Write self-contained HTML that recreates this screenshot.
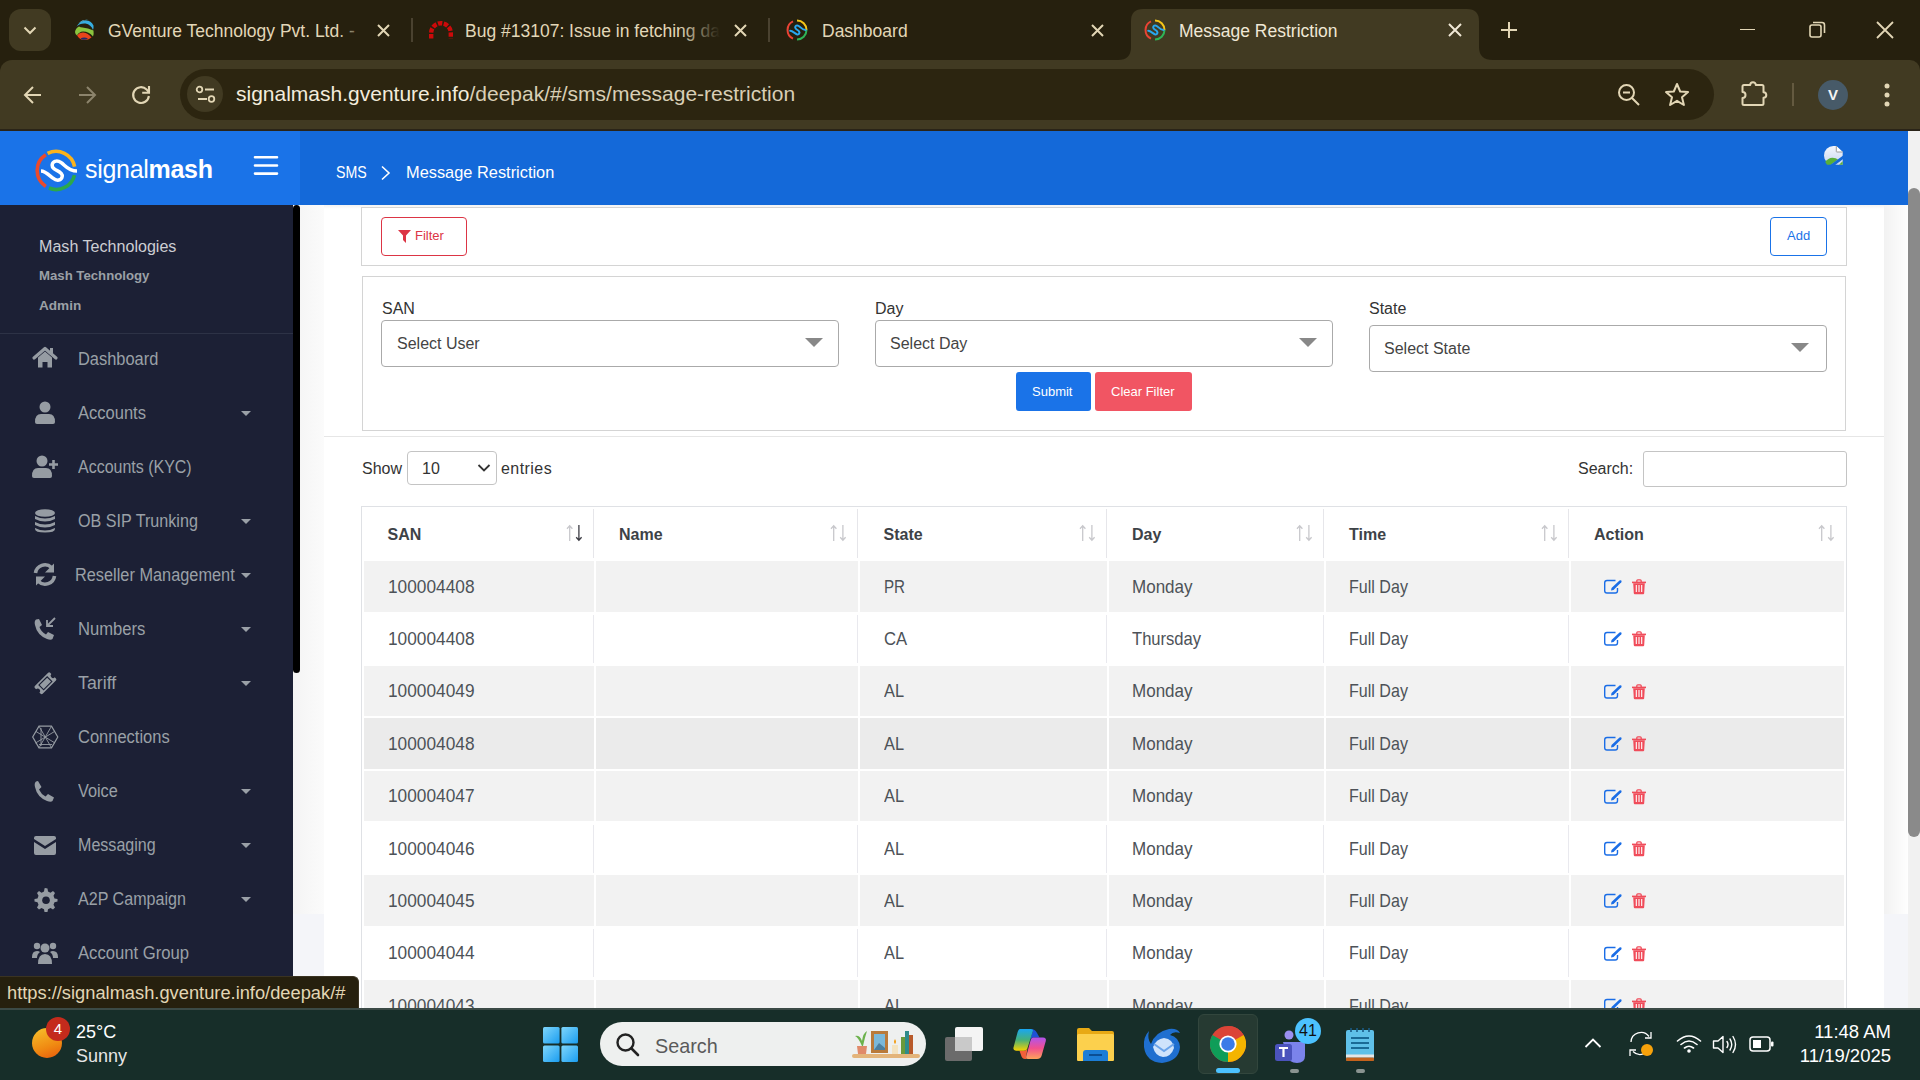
<!DOCTYPE html>
<html><head><meta charset="utf-8">
<style>
*{box-sizing:border-box;margin:0;padding:0}
html,body{width:1920px;height:1080px;overflow:hidden;background:#fff;font-family:"Liberation Sans",sans-serif}
.a{position:absolute}
.nw{white-space:nowrap}
/* chrome */
#tabs{left:0;top:0;width:1920px;height:80px;background:#26200e}
#toolbar{left:0;top:60px;width:1920px;height:70px;background:#413a22;border-top-left-radius:12px;border-top-right-radius:10px}
.tabt{font-size:17.5px;color:#e2d7b8;top:20px;line-height:22px}
.sep{width:2px;height:24px;top:18px;background:#4a4230}
#omni{left:180px;top:69px;width:1534px;height:51px;border-radius:26px;background:#2c2510}
/* page */
#hdr1{left:0;top:131px;width:300px;height:74px;background:#1a73e8}
#hdr2{left:300px;top:131px;width:1608px;height:74px;background:#1469d9}
#side{left:0;top:205px;width:293px;height:803px;background:#1c2035}
#sbar{left:293px;top:205px;width:7px;height:468px;background:#000;border-radius:4px;z-index:5}
#gl{left:293px;top:205px;width:31px;height:709px;background:linear-gradient(90deg,#f4f4f4,#fbfbfb)}
#gl2{left:293px;top:914px;width:31px;height:94px;background:#f4f5f9}
#gr{left:1884px;top:205px;width:24px;height:709px;background:linear-gradient(90deg,#f2f2f2,#fefefe)}
#gr2{left:1884px;top:914px;width:24px;height:94px;background:#f4f5f9}
#vs{left:1908px;top:131px;width:12px;height:877px;background:#f1f1f1}
#vthumb{left:1908px;top:188px;width:12px;height:649px;background:#8a8a8a;border-radius:6px}
.mi{left:78px;font-size:17.5px;color:#9aa0a7;line-height:20px;transform-origin:0 50%}
.caret{left:241px;width:0;height:0;border-left:5px solid transparent;border-right:5px solid transparent;border-top:5px solid #9aa0a7}
.ic{left:31px;width:28px;height:24px}
/* content */
.card{border:1px solid #d4d4d4;background:#fff}
.lbl{font-size:16px;color:#333;line-height:18px}
.sel{border:1px solid #aaa;border-radius:4px;background:#fff}
.selt{font-size:16px;color:#444;line-height:18px}
.tri{width:0;height:0;border-left:8px solid transparent;border-right:8px solid transparent;border-top:8px solid #888}
.th{font-size:16px;font-weight:700;color:#3d4247;line-height:18px;margin-top:0.7px}
.td{font-size:18.5px;color:#4d5258;line-height:20px;transform-origin:0 50%}
.row{left:364px;width:1480px;height:50px}
</style></head><body>
<!-- ======== CHROME TABS ======== -->
<div id="tabs" class="a"></div>
<div class="a" style="left:9px;top:9px;width:42px;height:42px;border-radius:12px;background:#413a22"></div>
<svg class="a" style="left:22px;top:22px" width="16" height="16" viewBox="0 0 16 16"><path d="M2.5 5.5 L8 11 L13.5 5.5" fill="none" stroke="#e2d6b5" stroke-width="2"/></svg>
<!-- tab1 -->
<svg class="a" style="left:74px;top:19px" width="21" height="22" viewBox="0 0 21 22">
<path d="M2.5 7.5Q6 1.5 12 1.5Q17 1.5 19.5 6.5Q19.8 9 19 11Q17 5.5 11.5 4.5Q6 4 2.5 7.5Z" fill="#37aee0"/>
<path d="M4.5 4Q9 0 14.5 1Q11 0.5 7 3Z" fill="#5fc6ee"/>
<path d="M1 13Q1.5 9 5 7.5Q6.5 8.5 8.5 8.5Q14 9 19.5 11.5Q20 14.5 19 17.5Q15 12.5 9 12.5Q5 12.8 3 16.5Q1.2 15.5 1 13Z" fill="#8bc53f"/>
<path d="M3 16.5Q5.5 13 9.5 13.5Q14 14 17.5 18.5Q14.5 21 10 21Q6 21 3 16.5Z" fill="#e8441b"/>
<path d="M6.5 19.5Q10 17.5 14 19.5Q11 21.5 8 20.5Z" fill="#1f2a6b"/>
</svg>
<div class="a tabt nw" style="left:108px;width:250px;overflow:hidden">GVenture Technology Pvt. Ltd. -</div>
<div class="a" style="left:338px;top:16px;width:30px;height:30px;background:linear-gradient(90deg,rgba(38,32,14,0),#26200e)"></div>
<svg class="a" style="left:377px;top:24px" width="13" height="13" viewBox="0 0 13 13"><path d="M1 1L12 12M12 1L1 12" stroke="#e2d6b5" stroke-width="2"/></svg>
<div class="a sep" style="left:411px"></div>
<!-- tab2 -->
<svg class="a" style="left:428px;top:19px" width="26" height="20" viewBox="0 0 26 20"><path d="M3.2 19.5V14A9.8 9.8 0 0 1 22.8 14V19.5" fill="none" stroke="#cc0a0a" stroke-width="4.4" stroke-dasharray="4.4 1.5"/></svg>
<div class="a tabt nw" style="left:465px;width:255px;overflow:hidden">Bug #13107: Issue in fetching da</div>
<div class="a" style="left:680px;top:16px;width:40px;height:30px;background:linear-gradient(90deg,rgba(38,32,14,0),#26200e)"></div>
<svg class="a" style="left:734px;top:24px" width="13" height="13" viewBox="0 0 13 13"><path d="M1 1L12 12M12 1L1 12" stroke="#e2d6b5" stroke-width="2"/></svg>
<div class="a sep" style="left:768px"></div>
<!-- tab3 -->
<svg class="a" style="left:786px;top:19px" width="22" height="22" viewBox="0 0 22 22" id="favi">
<path d="M11 1.5 A9.5 9.5 0 0 1 20.5 11" fill="none" stroke="#f5c518" stroke-width="2"/>
<path d="M20.5 11 A9.5 9.5 0 0 1 11 20.5" fill="none" stroke="#2fb457" stroke-width="2"/>
<path d="M7 19.6 A9.5 9.5 0 0 1 7 2.4" fill="none" stroke="#ea4335" stroke-width="2"/>
<path d="M4.2 11.8 C6.5 11.8, 9 14.5, 10.8 15.2 C13 16, 14.2 14, 13 12.3 C12 11, 9.5 10.5, 9.2 8.6 C9 6.8, 11 6, 12.5 6.8 C14.5 7.8, 16 11, 19.5 11" fill="none" stroke="#29a8f0" stroke-width="2" stroke-linecap="round"/>
</svg>
<div class="a tabt nw" style="left:822px">Dashboard</div>
<svg class="a" style="left:1091px;top:24px" width="13" height="13" viewBox="0 0 13 13"><path d="M1 1L12 12M12 1L1 12" stroke="#e2d6b5" stroke-width="2"/></svg>
<!-- active tab -->
<svg class="a" style="left:1118px;top:9px" width="376" height="52" viewBox="0 0 376 52"><path d="M0 51 Q13 51 13 38 L13 12 Q13 0 25 0 L349 0 Q361 0 361 12 L361 38 Q361 51 375 51 L375 52 L0 52Z" fill="#413a22"/></svg>
<svg class="a" style="left:1144px;top:19px" width="22" height="22" viewBox="0 0 22 22">
<path d="M11 1.5 A9.5 9.5 0 0 1 20.5 11" fill="none" stroke="#f5c518" stroke-width="2"/>
<path d="M20.5 11 A9.5 9.5 0 0 1 11 20.5" fill="none" stroke="#2fb457" stroke-width="2"/>
<path d="M7 19.6 A9.5 9.5 0 0 1 7 2.4" fill="none" stroke="#ea4335" stroke-width="2"/>
<path d="M4.2 11.8 C6.5 11.8, 9 14.5, 10.8 15.2 C13 16, 14.2 14, 13 12.3 C12 11, 9.5 10.5, 9.2 8.6 C9 6.8, 11 6, 12.5 6.8 C14.5 7.8, 16 11, 19.5 11" fill="none" stroke="#29a8f0" stroke-width="2" stroke-linecap="round"/>
</svg>
<div class="a tabt nw" style="left:1179px;color:#f0e8d6">Message Restriction</div>
<svg class="a" style="left:1448px;top:23px" width="14" height="14" viewBox="0 0 14 14"><path d="M1 1L13 13M13 1L1 13" stroke="#f0e8d6" stroke-width="2"/></svg>
<svg class="a" style="left:1501px;top:22px" width="16" height="16" viewBox="0 0 16 16"><path d="M8 0V16M0 8H16" stroke="#e2d6b5" stroke-width="2"/></svg>
<!-- window controls -->
<div class="a" style="left:1740px;top:28.5px;width:15px;height:1.6px;background:#e2d6b5"></div>
<svg class="a" style="left:1809px;top:21px" width="17" height="17" viewBox="0 0 17 17"><rect x="1" y="4" width="11" height="12" rx="2" fill="none" stroke="#e2d6b5" stroke-width="1.6"/><path d="M4 1.5H13Q15.5 1.5 15.5 4V12" fill="none" stroke="#e2d6b5" stroke-width="1.6"/></svg>
<svg class="a" style="left:1876px;top:21px" width="18" height="18" viewBox="0 0 18 18"><path d="M1 1L17 17M17 1L1 17" stroke="#e2d6b5" stroke-width="1.8"/></svg>

<!-- ======== TOOLBAR ======== -->
<div id="toolbar" class="a"></div>
<div class="a" style="left:0;top:129px;width:1920px;height:2px;background:#2a2418"></div>
<svg class="a" style="left:23px;top:85px" width="20" height="20" viewBox="0 0 20 20"><path d="M18 10H2M10 2L2 10L10 18" fill="none" stroke="#e2d6b5" stroke-width="2"/></svg>
<svg class="a" style="left:77px;top:85px" width="20" height="20" viewBox="0 0 20 20"><path d="M2 10H18M10 2L18 10L10 18" fill="none" stroke="#8c846c" stroke-width="2"/></svg>
<svg class="a" style="left:128px;top:82px" width="26" height="26" viewBox="0 0 26 26"><path d="M20.9 14A7.9 7.9 0 1 1 18.6 7.4L20.5 9.8" fill="none" stroke="#e2d6b5" stroke-width="2.1"/><path d="M21 3.9V10.7H14.2" fill="none" stroke="#e2d6b5" stroke-width="2.1"/></svg>
<div id="omni" class="a"></div>
<div class="a" style="left:187px;top:76px;width:36px;height:36px;border-radius:18px;background:#413a22"></div>
<svg class="a" style="left:195px;top:85px" width="22" height="20" viewBox="0 0 22 20"><circle cx="4.5" cy="4.5" r="2.8" fill="none" stroke="#e2d6b5" stroke-width="1.8"/><path d="M10 4.5H19M3 14H12" stroke="#e2d6b5" stroke-width="1.8"/><circle cx="16.5" cy="14" r="2.8" fill="none" stroke="#e2d6b5" stroke-width="1.8"/></svg>
<div class="a nw" style="left:236px;top:82px;font-size:21px;line-height:24px;color:#f3ecdc">signalmash.gventure.info<span style="color:#d9cfb6">/deepak/#/sms/message-restriction</span></div>
<svg class="a" style="left:1617px;top:83px" width="24" height="24" viewBox="0 0 24 24"><circle cx="9.5" cy="9.5" r="7.5" fill="none" stroke="#e2d6b5" stroke-width="2"/><path d="M15 15L22 22M6 9.5H13" stroke="#e2d6b5" stroke-width="2"/></svg>
<svg class="a" style="left:1664px;top:82px" width="26" height="26" viewBox="0 0 26 26"><path d="M13 2L16.2 9.5L24 10.1L18 15.2L19.9 23L13 18.8L6.1 23L8 15.2L2 10.1L9.8 9.5Z" fill="none" stroke="#e2d6b5" stroke-width="2" stroke-linejoin="round"/></svg>
<svg class="a" style="left:1740px;top:80px" width="28" height="28" viewBox="0 0 28 28"><path d="M4 5H10.2A2.8 2.8 0 0 1 15.8 5H22Q23.5 5 23.5 6.5V12.2A2.6 2.6 0 0 1 23.5 17.8V23.5Q23.5 25 22 25H4Q2.5 25 2.5 23.5V18A3 3 0 0 0 2.5 12V6.5Q2.5 5 4 5Z" fill="none" stroke="#e2d6b5" stroke-width="2" stroke-linejoin="round"/></svg>
<div class="a" style="left:1791.5px;top:83px;width:2px;height:23px;background:#645a40"></div>
<div class="a" style="left:1818px;top:80px;width:30px;height:30px;border-radius:15px;background:#475a68;color:#f4f4f4;font-size:15px;font-weight:700;line-height:30px;text-align:center">V</div>
<svg class="a" style="left:1881px;top:82px" width="12" height="26" viewBox="0 0 12 26"><circle cx="6" cy="4" r="2.5" fill="#e2d6b5"/><circle cx="6" cy="13" r="2.5" fill="#e2d6b5"/><circle cx="6" cy="22" r="2.5" fill="#e2d6b5"/></svg>

<!-- ======== PAGE HEADER ======== -->
<div id="hdr1" class="a"></div>
<div id="hdr2" class="a"></div>

<!-- logo -->
<svg class="a" style="left:30px;top:145px" width="56" height="52" viewBox="0 0 56 52">
<path d="M17.6 8.4 A18.8 18.8 0 0 1 44.6 21.6" fill="none" stroke="#fbb31b" stroke-width="3.6"/>
<path d="M44.5 30.1 A18.8 18.8 0 0 1 18.9 43" fill="none" stroke="#2ba84a" stroke-width="3.6"/>
<path d="M15.8 41.4 A18.8 18.8 0 0 1 15.8 9.8" fill="none" stroke="#ea4a2c" stroke-width="3.6"/>
<path d="M11 26 C15 26, 19 30, 23 33.2 C27 36.5, 31.5 35.5, 32.2 31.5 C32.8 28, 29 26.5, 26 25 C23 23.5, 21.5 21, 22.5 18.5 C24 15.5, 28 15.5, 31 17.5 C35 20, 38 26, 47 26" fill="none" stroke="#fff" stroke-width="3.5"/>
</svg>
<div class="a nw" style="left:85px;top:155px;font-size:25px;line-height:28px;color:#fff;letter-spacing:-0.3px;transform-origin:0 0;transform:scale(1.0,1.0)">signal<b>mash</b></div>
<svg class="a" style="left:253px;top:155px" width="26" height="21" viewBox="0 0 26 21"><path d="M2 2.3H24M2 10.5H24M2 18.6H24" stroke="#fff" stroke-width="2.6" stroke-linecap="round"/></svg>
<div class="a nw" style="left:336px;top:162.5px;font-size:17px;line-height:20px;color:#fff;transform-origin:0 0;transform:scaleX(0.834)">SMS</div>
<svg class="a" style="left:380px;top:165px" width="11" height="16" viewBox="0 0 11 16"><path d="M2 1.5L9 8L2 14.5" fill="none" stroke="#fff" stroke-width="1.6"/></svg>
<div class="a nw" style="left:406px;top:162.5px;font-size:17px;line-height:20px;color:#fff;transform-origin:0 0;transform:scaleX(0.963)">Message Restriction</div>
<svg class="a" style="left:1824px;top:146px" width="20" height="20" viewBox="0 0 20 20"><defs><linearGradient id="pg" x1="0" y1="0" x2="0" y2="1"><stop offset="0" stop-color="#f4f7fd"/><stop offset="1" stop-color="#c9d6ee"/></linearGradient></defs><path d="M9.3 0H12.3L18.7 6V18.8H9.3A9.3 9.4 0 0 1 9.3 0Z" fill="url(#pg)"/><path d="M12.3 0V5.5Q12.3 6 12.8 6H18.7" fill="#fff" stroke="#9a9a9a" stroke-width="1"/><path d="M1.2 16Q4 12 8.5 11.8Q12 11.8 14 13.5L7 18.8H3Z" fill="#5aaf3a"/><path d="M15 18.8L18.7 15.2V18.8Z" fill="#5aaf3a"/><path d="M5.5 19.5L19.5 9.2V12.8L10.5 19.5Z" fill="#1469d9"/></svg>
<!-- sidebar -->
<div id="side" class="a"></div>
<div id="sbar" class="a"></div>
<div class="a nw" style="left:39px;top:236px;font-size:17.4px;line-height:20px;color:#cdced3;transform-origin:0 0;transform:scaleX(0.925)">Mash Technologies</div>
<div class="a nw" style="left:39px;top:268px;font-size:13.2px;font-weight:700;line-height:16px;color:#9ba0a6">Mash Technology</div>
<div class="a nw" style="left:39px;top:298px;font-size:13.6px;font-weight:700;line-height:16px;color:#9ba0a6">Admin</div>
<div class="a" style="left:0;top:333px;width:293px;height:1px;background:#2d3246"></div>
<svg class="a" style="left:31px;top:346px" width="28" height="26" viewBox="0 0 28 26"><path d="M3 12L14 2.5L25 12" fill="none" stroke="#969ca3" stroke-width="3.2" stroke-linejoin="round" stroke-linecap="round"/><path d="M7 11.5L14 5.5L21 11.5V21.5H16.5V16H11.5V21.5H7Z" fill="#969ca3"/><rect x="19" y="2" width="3" height="6" fill="#969ca3"/></svg>
<div class="a mi nw" style="left:78px;top:349px;transform:scaleX(0.938)">Dashboard</div>
<svg class="a" style="left:31px;top:400px" width="28" height="26" viewBox="0 0 28 26"><circle cx="14" cy="7" r="5.5" fill="#969ca3"/><path d="M4 22Q4 14 10 14H18Q24 14 24 22Q24 24 22 24H6Q4 24 4 22Z" fill="#969ca3"/></svg>
<div class="a mi nw" style="left:78px;top:403px;transform:scaleX(0.944)">Accounts</div>
<div class="a caret" style="top:411px"></div>
<svg class="a" style="left:31px;top:454px" width="28" height="26" viewBox="0 0 28 26"><circle cx="11" cy="7" r="5.5" fill="#969ca3"/><path d="M1 22Q1 14 7 14H15Q21 14 21 22Q21 24 19 24H3Q1 24 1 22Z" fill="#969ca3"/><path d="M22.5 6V15M18 10.5H27" stroke="#969ca3" stroke-width="2.6"/></svg>
<div class="a mi nw" style="left:78px;top:457px;transform:scaleX(0.913)">Accounts (KYC)</div>
<svg class="a" style="left:31px;top:508px" width="28" height="26" viewBox="0 0 28 26"><ellipse cx="14" cy="5" rx="10" ry="3.8" fill="#969ca3"/><path d="M4 8Q14 13 24 8V11Q14 16 4 11Z" fill="#969ca3"/><path d="M4 14Q14 19 24 14V17Q14 22 4 17Z" fill="#969ca3"/><path d="M4 20Q14 25 24 20V21Q24 24.5 14 24.5Q4 24.5 4 21Z" fill="#969ca3"/></svg>
<div class="a mi nw" style="left:78px;top:511px;transform:scaleX(0.922)">OB SIP Trunking</div>
<div class="a caret" style="top:519px"></div>
<svg class="a" style="left:31px;top:562px" width="28" height="26" viewBox="0 0 28 26"><path d="M4.5 11A9.5 9.5 0 0 1 20.5 5.5" fill="none" stroke="#969ca3" stroke-width="3.6"/><path d="M23 1.5V10.5H14Z" fill="#969ca3"/><path d="M23.5 14A9.5 9.5 0 0 1 7.5 19.5" fill="none" stroke="#969ca3" stroke-width="3.6"/><path d="M5 23.5V14.5H14Z" fill="#969ca3"/></svg>
<div class="a mi nw" style="left:75px;top:565px;transform:scaleX(0.933)">Reseller Management</div>
<div class="a caret" style="top:573px"></div>
<svg class="a" style="left:31px;top:616px" width="28" height="26" viewBox="0 0 28 26"><path d="M8 3L11 9L8.5 11Q10 16 15 18.5L17 16L23 19L21.5 23Q20 24.5 16 23Q6 19 4 9Q3 5 5 3.5Z" fill="#969ca3"/><path d="M24 2L16 10M16 4V10H22" fill="none" stroke="#969ca3" stroke-width="1.8"/></svg>
<div class="a mi nw" style="left:78px;top:619px;transform:scaleX(0.949)">Numbers</div>
<div class="a caret" style="top:627px"></div>
<svg class="a" style="left:31px;top:670px" width="28" height="26" viewBox="0 0 28 26"><g transform="rotate(-45 14.4 13.3)"><path d="M5 7.8H23.8Q25.2 7.8 25.2 9.2V10.9A2.4 2.4 0 0 0 25.2 15.7V17.4Q25.2 18.8 23.8 18.8H5Q3.6 18.8 3.6 17.4V15.7A2.4 2.4 0 0 0 3.6 10.9V9.2Q3.6 7.8 5 7.8Z" fill="#969ca3"/><rect x="8.6" y="10" width="11.6" height="6.6" fill="none" stroke="#1c2035" stroke-width="1.1"/></g></svg>
<div class="a mi nw" style="left:78px;top:673px;transform:scaleX(1.016)">Tariff</div>
<div class="a caret" style="top:681px"></div>
<svg class="a" style="left:31px;top:724px" width="28" height="26" viewBox="0 0 28 26"><path d="M8 2.2H20.5L26.8 13L20.5 23.8H8L1.7 13Z" fill="none" stroke="#969ca3" stroke-width="1.2"/><path d="M8 2.2L20.5 23.8M20.5 2.2L8 23.8M5 7.5L24 19M23.5 7.5L4.5 19M8 20.5H21M10 4V22" fill="none" stroke="#969ca3" stroke-width="0.9"/></svg>
<div class="a mi nw" style="left:78px;top:727px;transform:scaleX(0.942)">Connections</div>
<svg class="a" style="left:31px;top:778px" width="28" height="26" viewBox="0 0 28 26"><path d="M7 3L10.5 9L8 11.5Q10 16 14.5 18.5L17 16L23 19.5L21.5 23Q20 24.5 16 23Q6 19 4 9Q3 5 5 3.5Z" fill="#969ca3"/></svg>
<div class="a mi nw" style="left:78px;top:781px;transform:scaleX(0.930)">Voice</div>
<div class="a caret" style="top:789px"></div>
<svg class="a" style="left:31px;top:832px" width="28" height="26" viewBox="0 0 28 26"><path d="M3 6Q3 4 5 4H23Q25 4 25 6V7L14 14L3 7Z" fill="#969ca3"/><path d="M3 10L14 17L25 10V21Q25 23 23 23H5Q3 23 3 21Z" fill="#969ca3"/></svg>
<div class="a mi nw" style="left:78px;top:835px;transform:scaleX(0.918)">Messaging</div>
<div class="a caret" style="top:843px"></div>
<svg class="a" style="left:31px;top:886px" width="28" height="26" viewBox="0 0 28 26"><path d="M14 2L16.5 2.5L17 5.5L19.5 6.8L22 5L24 7L22.5 9.8L23.5 12.5L26.5 13V15.5L23.5 16.2L22.5 18.8L24 21.5L22 23.5L19.5 22L17 23.2L16.5 26H13.5L13 23.2L10.5 22L8 23.5L6 21.5L7.5 18.8L6.5 16.2L3.5 15.5V13L6.5 12.5L7.5 9.8L6 7L8 5L10.5 6.8L13 5.5L13.5 2.5Z" fill="#969ca3"/><circle cx="15" cy="14.3" r="3.8" fill="#1c2035"/></svg>
<div class="a mi nw" style="left:78px;top:889px;transform:scaleX(0.919)">A2P Campaign</div>
<div class="a caret" style="top:897px"></div>
<svg class="a" style="left:31px;top:940px" width="28" height="26" viewBox="0 0 28 26"><circle cx="14" cy="8" r="4.5" fill="#969ca3"/><circle cx="6" cy="6" r="3.2" fill="#969ca3"/><circle cx="22" cy="6" r="3.2" fill="#969ca3"/><path d="M7 24Q7 14 14 14Q21 14 21 24Z" fill="#969ca3"/><path d="M1 17Q1 11 6 11Q8 11 9 12Q6 14 6 18H1Z" fill="#969ca3"/><path d="M27 17Q27 11 22 11Q20 11 19 12Q22 14 22 18H27Z" fill="#969ca3"/></svg>
<div class="a mi nw" style="left:78px;top:943px;transform:scaleX(0.952)">Account Group</div>

<!-- ======== CONTENT ======== -->
<div id="gl" class="a"></div><div id="gl2" class="a"></div>
<div id="gr" class="a"></div><div id="gr2" class="a"></div>
<div class="a" style="left:324px;top:205px;width:1560px;height:4px;background:linear-gradient(#f2f2f2,#fff)"></div>
<div class="a card" style="left:361px;top:207px;width:1486px;height:59px"></div>
<div class="a" style="left:381px;top:217px;width:86px;height:39px;border:1px solid #dc3545;border-radius:4px"></div>
<svg class="a" style="left:397px;top:229px" width="15" height="15" viewBox="0 0 15 15"><path d="M1 1H14L9 6.5V14L6 11V6.5Z" fill="#dc3545"/></svg>
<div class="a nw" style="left:415px;top:228px;font-size:13px;line-height:16px;color:#dc3545">Filter</div>
<div class="a" style="left:1770px;top:217px;width:57px;height:39px;border:1px solid #1a73e8;border-radius:4px"></div>
<div class="a nw" style="left:1787px;top:228px;font-size:13px;line-height:16px;color:#1a73e8">Add</div>

<div class="a card" style="left:362px;top:276px;width:1484px;height:155px"></div>
<div class="a lbl nw" style="left:382px;top:300px">SAN</div>
<div class="a lbl nw" style="left:875px;top:300px">Day</div>
<div class="a lbl nw" style="left:1369px;top:300px">State</div>
<div class="a sel" style="left:381px;top:320px;width:458px;height:47px"></div>
<div class="a selt nw" style="left:397px;top:335px">Select User</div>
<div class="a tri" style="left:805px;top:338px;border-left-width:9px;border-right-width:9px;border-top-width:9px"></div>
<div class="a sel" style="left:875px;top:320px;width:458px;height:47px"></div>
<div class="a selt nw" style="left:890px;top:335px">Select Day</div>
<div class="a tri" style="left:1299px;top:338px;border-left-width:9px;border-right-width:9px;border-top-width:9px"></div>
<div class="a sel" style="left:1369px;top:325px;width:458px;height:47px"></div>
<div class="a selt nw" style="left:1384px;top:340px">Select State</div>
<div class="a tri" style="left:1791px;top:343px;border-left-width:9px;border-right-width:9px;border-top-width:9px"></div>
<div class="a" style="left:1016px;top:372px;width:75px;height:39px;background:#1a73e8;border-radius:3px"></div>
<div class="a nw" style="left:1032px;top:383.5px;font-size:13px;line-height:16px;color:#fff">Submit</div>
<div class="a" style="left:1095px;top:372px;width:97px;height:39px;background:#f15563;border-radius:3px"></div>
<div class="a nw" style="left:1111px;top:383.5px;font-size:13px;line-height:16px;color:#fff">Clear Filter</div>
<div class="a" style="left:324px;top:436px;width:1560px;height:1px;background:#e6e6e6"></div>

<div class="a nw" style="left:362px;top:460.2px;font-size:16px;line-height:18px;color:#333">Show</div>
<div class="a" style="left:407px;top:451px;width:90px;height:34px;border:1px solid #c4c4c4;border-radius:4px"></div>
<div class="a nw" style="left:422px;top:460.2px;font-size:16px;line-height:18px;color:#333">10</div>
<svg class="a" style="left:477px;top:463px" width="14" height="10" viewBox="0 0 14 10"><path d="M1.5 2L7 7.5L12.5 2" fill="none" stroke="#333" stroke-width="1.8"/></svg>
<div class="a nw" style="left:501px;top:460.2px;letter-spacing:0.45px;font-size:16px;line-height:18px;color:#333">entries</div>
<div class="a nw" style="left:1578px;top:460.2px;font-size:16px;line-height:18px;color:#333">Search:</div>
<div class="a" style="left:1643px;top:451px;width:204px;height:36px;border:1px solid #c4c4c4;border-radius:3px"></div>
<!--TABLE-->
<div class="a" style="left:361px;top:506px;width:1486px;height:510px;border:1px solid #dfe1e5;border-bottom:none"></div>
<div class="a th nw" style="left:387.5px;top:525px">SAN</div>
<svg class="a" style="left:566px;top:524px" width="18" height="18" viewBox="0 0 18 18"><path d="M3.7 17V1.8M1 4.7L3.7 1.8L6.4 4.7" fill="none" stroke="#c8c8cc" stroke-width="1.3"/><path d="M12.9 1V16.2M10.2 13.3L12.9 16.2L15.6 13.3" fill="none" stroke="#3c3c44" stroke-width="1.3"/></svg>
<div class="a" style="left:593px;top:509px;width:1px;height:49px;background:#e6e6ea"></div>
<div class="a th nw" style="left:619px;top:525px">Name</div>
<svg class="a" style="left:830px;top:524px" width="18" height="18" viewBox="0 0 18 18"><path d="M3.7 17V1.8M1 4.7L3.7 1.8L6.4 4.7" fill="none" stroke="#c8c8cc" stroke-width="1.3"/><path d="M12.9 1V16.2M10.2 13.3L12.9 16.2L15.6 13.3" fill="none" stroke="#c8c8cc" stroke-width="1.3"/></svg>
<div class="a" style="left:857px;top:509px;width:1px;height:49px;background:#e6e6ea"></div>
<div class="a th nw" style="left:883.5px;top:525px">State</div>
<svg class="a" style="left:1079px;top:524px" width="18" height="18" viewBox="0 0 18 18"><path d="M3.7 17V1.8M1 4.7L3.7 1.8L6.4 4.7" fill="none" stroke="#c8c8cc" stroke-width="1.3"/><path d="M12.9 1V16.2M10.2 13.3L12.9 16.2L15.6 13.3" fill="none" stroke="#c8c8cc" stroke-width="1.3"/></svg>
<div class="a" style="left:1106px;top:509px;width:1px;height:49px;background:#e6e6ea"></div>
<div class="a th nw" style="left:1132px;top:525px">Day</div>
<svg class="a" style="left:1296px;top:524px" width="18" height="18" viewBox="0 0 18 18"><path d="M3.7 17V1.8M1 4.7L3.7 1.8L6.4 4.7" fill="none" stroke="#c8c8cc" stroke-width="1.3"/><path d="M12.9 1V16.2M10.2 13.3L12.9 16.2L15.6 13.3" fill="none" stroke="#c8c8cc" stroke-width="1.3"/></svg>
<div class="a" style="left:1323px;top:509px;width:1px;height:49px;background:#e6e6ea"></div>
<div class="a th nw" style="left:1349px;top:525px">Time</div>
<svg class="a" style="left:1541px;top:524px" width="18" height="18" viewBox="0 0 18 18"><path d="M3.7 17V1.8M1 4.7L3.7 1.8L6.4 4.7" fill="none" stroke="#c8c8cc" stroke-width="1.3"/><path d="M12.9 1V16.2M10.2 13.3L12.9 16.2L15.6 13.3" fill="none" stroke="#c8c8cc" stroke-width="1.3"/></svg>
<div class="a" style="left:1568px;top:509px;width:1px;height:49px;background:#e6e6ea"></div>
<div class="a th nw" style="left:1594px;top:525px">Action</div>
<svg class="a" style="left:1818px;top:524px" width="18" height="18" viewBox="0 0 18 18"><path d="M3.7 17V1.8M1 4.7L3.7 1.8L6.4 4.7" fill="none" stroke="#c8c8cc" stroke-width="1.3"/><path d="M12.9 1V16.2M10.2 13.3L12.9 16.2L15.6 13.3" fill="none" stroke="#c8c8cc" stroke-width="1.3"/></svg>
<div class="a" style="left:364px;top:561.0px;width:230px;height:50.5px;background:#f2f2f2"></div>
<div class="a" style="left:596px;top:561.0px;width:262px;height:50.5px;background:#f2f2f2"></div>
<div class="a" style="left:860px;top:561.0px;width:247px;height:50.5px;background:#f2f2f2"></div>
<div class="a" style="left:1109px;top:561.0px;width:215px;height:50.5px;background:#f2f2f2"></div>
<div class="a" style="left:1326px;top:561.0px;width:243px;height:50.5px;background:#f2f2f2"></div>
<div class="a" style="left:1571px;top:561.0px;width:273px;height:50.5px;background:#f2f2f2"></div>
<div class="a td nw" style="left:388px;top:576.5px;transform:scaleX(0.934)">100004408</div>
<div class="a td nw" style="left:883.5px;top:576.5px;transform:scaleX(0.82)">PR</div>
<div class="a td nw" style="left:1132px;top:576.5px;transform:scaleX(0.92)">Monday</div>
<div class="a td nw" style="left:1349px;top:576.5px;transform:scaleX(0.869)">Full Day</div>
<svg class="a" style="left:1603px;top:579.0px" width="20" height="16" viewBox="0 0 20 16"><path d="M12.5 1.5H4Q1.7 1.5 1.7 3.8V11.7Q1.7 14 4 14H12.2Q14.5 14 14.5 11.7V9" fill="none" stroke="#1a6de6" stroke-width="1.4"/><path d="M8 11.5L8.5 9L16.5 1.5Q17.5 0.8 18.3 1.6Q19 2.4 18.3 3.3L10.5 11Z" fill="#1a6de6"/></svg>
<svg class="a" style="left:1632px;top:579.0px" width="14" height="16" viewBox="0 0 14 16"><path d="M4.8 3V1.8Q4.8 0.8 5.8 0.8H8.2Q9.2 0.8 9.2 1.8V3" fill="none" stroke="#f04c5a" stroke-width="1.3"/><path d="M0 2.6H14V4.2H0Z" fill="#f04c5a"/><path d="M1.2 4.2H12.8L12.2 14.3Q12.1 15.2 11.2 15.2H2.8Q1.9 15.2 1.8 14.3Z" fill="#f04c5a"/><path d="M4.3 6V13M7 6V13M9.7 6V13" stroke="#fff" stroke-width="1.1"/></svg>
<div class="a" style="left:593px;top:614.9px;width:1px;height:48px;background:#e9e9ee"></div>
<div class="a" style="left:857px;top:614.9px;width:1px;height:48px;background:#e9e9ee"></div>
<div class="a" style="left:1106px;top:614.9px;width:1px;height:48px;background:#e9e9ee"></div>
<div class="a" style="left:1323px;top:614.9px;width:1px;height:48px;background:#e9e9ee"></div>
<div class="a" style="left:1568px;top:614.9px;width:1px;height:48px;background:#e9e9ee"></div>
<div class="a td nw" style="left:388px;top:628.9px;transform:scaleX(0.934)">100004408</div>
<div class="a td nw" style="left:883.5px;top:628.9px;transform:scaleX(0.9)">CA</div>
<div class="a td nw" style="left:1132px;top:628.9px;transform:scaleX(0.896)">Thursday</div>
<div class="a td nw" style="left:1349px;top:628.9px;transform:scaleX(0.869)">Full Day</div>
<svg class="a" style="left:1603px;top:631.4px" width="20" height="16" viewBox="0 0 20 16"><path d="M12.5 1.5H4Q1.7 1.5 1.7 3.8V11.7Q1.7 14 4 14H12.2Q14.5 14 14.5 11.7V9" fill="none" stroke="#1a6de6" stroke-width="1.4"/><path d="M8 11.5L8.5 9L16.5 1.5Q17.5 0.8 18.3 1.6Q19 2.4 18.3 3.3L10.5 11Z" fill="#1a6de6"/></svg>
<svg class="a" style="left:1632px;top:631.4px" width="14" height="16" viewBox="0 0 14 16"><path d="M4.8 3V1.8Q4.8 0.8 5.8 0.8H8.2Q9.2 0.8 9.2 1.8V3" fill="none" stroke="#f04c5a" stroke-width="1.3"/><path d="M0 2.6H14V4.2H0Z" fill="#f04c5a"/><path d="M1.2 4.2H12.8L12.2 14.3Q12.1 15.2 11.2 15.2H2.8Q1.9 15.2 1.8 14.3Z" fill="#f04c5a"/><path d="M4.3 6V13M7 6V13M9.7 6V13" stroke="#fff" stroke-width="1.1"/></svg>
<div class="a" style="left:364px;top:665.8px;width:230px;height:50.5px;background:#f2f2f2"></div>
<div class="a" style="left:596px;top:665.8px;width:262px;height:50.5px;background:#f2f2f2"></div>
<div class="a" style="left:860px;top:665.8px;width:247px;height:50.5px;background:#f2f2f2"></div>
<div class="a" style="left:1109px;top:665.8px;width:215px;height:50.5px;background:#f2f2f2"></div>
<div class="a" style="left:1326px;top:665.8px;width:243px;height:50.5px;background:#f2f2f2"></div>
<div class="a" style="left:1571px;top:665.8px;width:273px;height:50.5px;background:#f2f2f2"></div>
<div class="a td nw" style="left:388px;top:681.3px;transform:scaleX(0.934)">100004049</div>
<div class="a td nw" style="left:883.5px;top:681.3px;transform:scaleX(0.885)">AL</div>
<div class="a td nw" style="left:1132px;top:681.3px;transform:scaleX(0.92)">Monday</div>
<div class="a td nw" style="left:1349px;top:681.3px;transform:scaleX(0.869)">Full Day</div>
<svg class="a" style="left:1603px;top:683.8px" width="20" height="16" viewBox="0 0 20 16"><path d="M12.5 1.5H4Q1.7 1.5 1.7 3.8V11.7Q1.7 14 4 14H12.2Q14.5 14 14.5 11.7V9" fill="none" stroke="#1a6de6" stroke-width="1.4"/><path d="M8 11.5L8.5 9L16.5 1.5Q17.5 0.8 18.3 1.6Q19 2.4 18.3 3.3L10.5 11Z" fill="#1a6de6"/></svg>
<svg class="a" style="left:1632px;top:683.8px" width="14" height="16" viewBox="0 0 14 16"><path d="M4.8 3V1.8Q4.8 0.8 5.8 0.8H8.2Q9.2 0.8 9.2 1.8V3" fill="none" stroke="#f04c5a" stroke-width="1.3"/><path d="M0 2.6H14V4.2H0Z" fill="#f04c5a"/><path d="M1.2 4.2H12.8L12.2 14.3Q12.1 15.2 11.2 15.2H2.8Q1.9 15.2 1.8 14.3Z" fill="#f04c5a"/><path d="M4.3 6V13M7 6V13M9.7 6V13" stroke="#fff" stroke-width="1.1"/></svg>
<div class="a" style="left:364px;top:718.2px;width:230px;height:50.5px;background:#ebebeb"></div>
<div class="a" style="left:596px;top:718.2px;width:262px;height:50.5px;background:#ebebeb"></div>
<div class="a" style="left:860px;top:718.2px;width:247px;height:50.5px;background:#ebebeb"></div>
<div class="a" style="left:1109px;top:718.2px;width:215px;height:50.5px;background:#ebebeb"></div>
<div class="a" style="left:1326px;top:718.2px;width:243px;height:50.5px;background:#ebebeb"></div>
<div class="a" style="left:1571px;top:718.2px;width:273px;height:50.5px;background:#ebebeb"></div>
<div class="a td nw" style="left:388px;top:733.7px;transform:scaleX(0.934)">100004048</div>
<div class="a td nw" style="left:883.5px;top:733.7px;transform:scaleX(0.885)">AL</div>
<div class="a td nw" style="left:1132px;top:733.7px;transform:scaleX(0.92)">Monday</div>
<div class="a td nw" style="left:1349px;top:733.7px;transform:scaleX(0.869)">Full Day</div>
<svg class="a" style="left:1603px;top:736.2px" width="20" height="16" viewBox="0 0 20 16"><path d="M12.5 1.5H4Q1.7 1.5 1.7 3.8V11.7Q1.7 14 4 14H12.2Q14.5 14 14.5 11.7V9" fill="none" stroke="#1a6de6" stroke-width="1.4"/><path d="M8 11.5L8.5 9L16.5 1.5Q17.5 0.8 18.3 1.6Q19 2.4 18.3 3.3L10.5 11Z" fill="#1a6de6"/></svg>
<svg class="a" style="left:1632px;top:736.2px" width="14" height="16" viewBox="0 0 14 16"><path d="M4.8 3V1.8Q4.8 0.8 5.8 0.8H8.2Q9.2 0.8 9.2 1.8V3" fill="none" stroke="#f04c5a" stroke-width="1.3"/><path d="M0 2.6H14V4.2H0Z" fill="#f04c5a"/><path d="M1.2 4.2H12.8L12.2 14.3Q12.1 15.2 11.2 15.2H2.8Q1.9 15.2 1.8 14.3Z" fill="#f04c5a"/><path d="M4.3 6V13M7 6V13M9.7 6V13" stroke="#fff" stroke-width="1.1"/></svg>
<div class="a" style="left:364px;top:770.6px;width:230px;height:50.5px;background:#f2f2f2"></div>
<div class="a" style="left:596px;top:770.6px;width:262px;height:50.5px;background:#f2f2f2"></div>
<div class="a" style="left:860px;top:770.6px;width:247px;height:50.5px;background:#f2f2f2"></div>
<div class="a" style="left:1109px;top:770.6px;width:215px;height:50.5px;background:#f2f2f2"></div>
<div class="a" style="left:1326px;top:770.6px;width:243px;height:50.5px;background:#f2f2f2"></div>
<div class="a" style="left:1571px;top:770.6px;width:273px;height:50.5px;background:#f2f2f2"></div>
<div class="a td nw" style="left:388px;top:786.1px;transform:scaleX(0.934)">100004047</div>
<div class="a td nw" style="left:883.5px;top:786.1px;transform:scaleX(0.885)">AL</div>
<div class="a td nw" style="left:1132px;top:786.1px;transform:scaleX(0.92)">Monday</div>
<div class="a td nw" style="left:1349px;top:786.1px;transform:scaleX(0.869)">Full Day</div>
<svg class="a" style="left:1603px;top:788.6px" width="20" height="16" viewBox="0 0 20 16"><path d="M12.5 1.5H4Q1.7 1.5 1.7 3.8V11.7Q1.7 14 4 14H12.2Q14.5 14 14.5 11.7V9" fill="none" stroke="#1a6de6" stroke-width="1.4"/><path d="M8 11.5L8.5 9L16.5 1.5Q17.5 0.8 18.3 1.6Q19 2.4 18.3 3.3L10.5 11Z" fill="#1a6de6"/></svg>
<svg class="a" style="left:1632px;top:788.6px" width="14" height="16" viewBox="0 0 14 16"><path d="M4.8 3V1.8Q4.8 0.8 5.8 0.8H8.2Q9.2 0.8 9.2 1.8V3" fill="none" stroke="#f04c5a" stroke-width="1.3"/><path d="M0 2.6H14V4.2H0Z" fill="#f04c5a"/><path d="M1.2 4.2H12.8L12.2 14.3Q12.1 15.2 11.2 15.2H2.8Q1.9 15.2 1.8 14.3Z" fill="#f04c5a"/><path d="M4.3 6V13M7 6V13M9.7 6V13" stroke="#fff" stroke-width="1.1"/></svg>
<div class="a" style="left:593px;top:824.5px;width:1px;height:48px;background:#e9e9ee"></div>
<div class="a" style="left:857px;top:824.5px;width:1px;height:48px;background:#e9e9ee"></div>
<div class="a" style="left:1106px;top:824.5px;width:1px;height:48px;background:#e9e9ee"></div>
<div class="a" style="left:1323px;top:824.5px;width:1px;height:48px;background:#e9e9ee"></div>
<div class="a" style="left:1568px;top:824.5px;width:1px;height:48px;background:#e9e9ee"></div>
<div class="a td nw" style="left:388px;top:838.5px;transform:scaleX(0.934)">100004046</div>
<div class="a td nw" style="left:883.5px;top:838.5px;transform:scaleX(0.885)">AL</div>
<div class="a td nw" style="left:1132px;top:838.5px;transform:scaleX(0.92)">Monday</div>
<div class="a td nw" style="left:1349px;top:838.5px;transform:scaleX(0.869)">Full Day</div>
<svg class="a" style="left:1603px;top:841.0px" width="20" height="16" viewBox="0 0 20 16"><path d="M12.5 1.5H4Q1.7 1.5 1.7 3.8V11.7Q1.7 14 4 14H12.2Q14.5 14 14.5 11.7V9" fill="none" stroke="#1a6de6" stroke-width="1.4"/><path d="M8 11.5L8.5 9L16.5 1.5Q17.5 0.8 18.3 1.6Q19 2.4 18.3 3.3L10.5 11Z" fill="#1a6de6"/></svg>
<svg class="a" style="left:1632px;top:841.0px" width="14" height="16" viewBox="0 0 14 16"><path d="M4.8 3V1.8Q4.8 0.8 5.8 0.8H8.2Q9.2 0.8 9.2 1.8V3" fill="none" stroke="#f04c5a" stroke-width="1.3"/><path d="M0 2.6H14V4.2H0Z" fill="#f04c5a"/><path d="M1.2 4.2H12.8L12.2 14.3Q12.1 15.2 11.2 15.2H2.8Q1.9 15.2 1.8 14.3Z" fill="#f04c5a"/><path d="M4.3 6V13M7 6V13M9.7 6V13" stroke="#fff" stroke-width="1.1"/></svg>
<div class="a" style="left:364px;top:875.4px;width:230px;height:50.5px;background:#f2f2f2"></div>
<div class="a" style="left:596px;top:875.4px;width:262px;height:50.5px;background:#f2f2f2"></div>
<div class="a" style="left:860px;top:875.4px;width:247px;height:50.5px;background:#f2f2f2"></div>
<div class="a" style="left:1109px;top:875.4px;width:215px;height:50.5px;background:#f2f2f2"></div>
<div class="a" style="left:1326px;top:875.4px;width:243px;height:50.5px;background:#f2f2f2"></div>
<div class="a" style="left:1571px;top:875.4px;width:273px;height:50.5px;background:#f2f2f2"></div>
<div class="a td nw" style="left:388px;top:890.9px;transform:scaleX(0.934)">100004045</div>
<div class="a td nw" style="left:883.5px;top:890.9px;transform:scaleX(0.885)">AL</div>
<div class="a td nw" style="left:1132px;top:890.9px;transform:scaleX(0.92)">Monday</div>
<div class="a td nw" style="left:1349px;top:890.9px;transform:scaleX(0.869)">Full Day</div>
<svg class="a" style="left:1603px;top:893.4px" width="20" height="16" viewBox="0 0 20 16"><path d="M12.5 1.5H4Q1.7 1.5 1.7 3.8V11.7Q1.7 14 4 14H12.2Q14.5 14 14.5 11.7V9" fill="none" stroke="#1a6de6" stroke-width="1.4"/><path d="M8 11.5L8.5 9L16.5 1.5Q17.5 0.8 18.3 1.6Q19 2.4 18.3 3.3L10.5 11Z" fill="#1a6de6"/></svg>
<svg class="a" style="left:1632px;top:893.4px" width="14" height="16" viewBox="0 0 14 16"><path d="M4.8 3V1.8Q4.8 0.8 5.8 0.8H8.2Q9.2 0.8 9.2 1.8V3" fill="none" stroke="#f04c5a" stroke-width="1.3"/><path d="M0 2.6H14V4.2H0Z" fill="#f04c5a"/><path d="M1.2 4.2H12.8L12.2 14.3Q12.1 15.2 11.2 15.2H2.8Q1.9 15.2 1.8 14.3Z" fill="#f04c5a"/><path d="M4.3 6V13M7 6V13M9.7 6V13" stroke="#fff" stroke-width="1.1"/></svg>
<div class="a" style="left:593px;top:929.3px;width:1px;height:48px;background:#e9e9ee"></div>
<div class="a" style="left:857px;top:929.3px;width:1px;height:48px;background:#e9e9ee"></div>
<div class="a" style="left:1106px;top:929.3px;width:1px;height:48px;background:#e9e9ee"></div>
<div class="a" style="left:1323px;top:929.3px;width:1px;height:48px;background:#e9e9ee"></div>
<div class="a" style="left:1568px;top:929.3px;width:1px;height:48px;background:#e9e9ee"></div>
<div class="a td nw" style="left:388px;top:943.3px;transform:scaleX(0.934)">100004044</div>
<div class="a td nw" style="left:883.5px;top:943.3px;transform:scaleX(0.885)">AL</div>
<div class="a td nw" style="left:1132px;top:943.3px;transform:scaleX(0.92)">Monday</div>
<div class="a td nw" style="left:1349px;top:943.3px;transform:scaleX(0.869)">Full Day</div>
<svg class="a" style="left:1603px;top:945.8px" width="20" height="16" viewBox="0 0 20 16"><path d="M12.5 1.5H4Q1.7 1.5 1.7 3.8V11.7Q1.7 14 4 14H12.2Q14.5 14 14.5 11.7V9" fill="none" stroke="#1a6de6" stroke-width="1.4"/><path d="M8 11.5L8.5 9L16.5 1.5Q17.5 0.8 18.3 1.6Q19 2.4 18.3 3.3L10.5 11Z" fill="#1a6de6"/></svg>
<svg class="a" style="left:1632px;top:945.8px" width="14" height="16" viewBox="0 0 14 16"><path d="M4.8 3V1.8Q4.8 0.8 5.8 0.8H8.2Q9.2 0.8 9.2 1.8V3" fill="none" stroke="#f04c5a" stroke-width="1.3"/><path d="M0 2.6H14V4.2H0Z" fill="#f04c5a"/><path d="M1.2 4.2H12.8L12.2 14.3Q12.1 15.2 11.2 15.2H2.8Q1.9 15.2 1.8 14.3Z" fill="#f04c5a"/><path d="M4.3 6V13M7 6V13M9.7 6V13" stroke="#fff" stroke-width="1.1"/></svg>
<div class="a" style="left:364px;top:980.2px;width:230px;height:50.5px;background:#f2f2f2"></div>
<div class="a" style="left:596px;top:980.2px;width:262px;height:50.5px;background:#f2f2f2"></div>
<div class="a" style="left:860px;top:980.2px;width:247px;height:50.5px;background:#f2f2f2"></div>
<div class="a" style="left:1109px;top:980.2px;width:215px;height:50.5px;background:#f2f2f2"></div>
<div class="a" style="left:1326px;top:980.2px;width:243px;height:50.5px;background:#f2f2f2"></div>
<div class="a" style="left:1571px;top:980.2px;width:273px;height:50.5px;background:#f2f2f2"></div>
<div class="a td nw" style="left:388px;top:995.7px;transform:scaleX(0.934)">100004043</div>
<div class="a td nw" style="left:883.5px;top:995.7px;transform:scaleX(0.885)">AL</div>
<div class="a td nw" style="left:1132px;top:995.7px;transform:scaleX(0.92)">Monday</div>
<div class="a td nw" style="left:1349px;top:995.7px;transform:scaleX(0.869)">Full Day</div>
<svg class="a" style="left:1603px;top:998.2px" width="20" height="16" viewBox="0 0 20 16"><path d="M12.5 1.5H4Q1.7 1.5 1.7 3.8V11.7Q1.7 14 4 14H12.2Q14.5 14 14.5 11.7V9" fill="none" stroke="#1a6de6" stroke-width="1.4"/><path d="M8 11.5L8.5 9L16.5 1.5Q17.5 0.8 18.3 1.6Q19 2.4 18.3 3.3L10.5 11Z" fill="#1a6de6"/></svg>
<svg class="a" style="left:1632px;top:998.2px" width="14" height="16" viewBox="0 0 14 16"><path d="M4.8 3V1.8Q4.8 0.8 5.8 0.8H8.2Q9.2 0.8 9.2 1.8V3" fill="none" stroke="#f04c5a" stroke-width="1.3"/><path d="M0 2.6H14V4.2H0Z" fill="#f04c5a"/><path d="M1.2 4.2H12.8L12.2 14.3Q12.1 15.2 11.2 15.2H2.8Q1.9 15.2 1.8 14.3Z" fill="#f04c5a"/><path d="M4.3 6V13M7 6V13M9.7 6V13" stroke="#fff" stroke-width="1.1"/></svg>
<!--/TABLE-->
<div id="vs" class="a"></div>
<div id="vthumb" class="a"></div>

<!-- ======== STATUS BUBBLE ======== -->
<div class="a" style="left:0;top:976px;width:359px;height:33px;background:#26200e;border-top-right-radius:6px;border-top:1px solid #3a3322;border-right:1px solid #3a3322"></div>
<div class="a nw" style="left:7px;top:982px;font-size:18.3px;line-height:22px;color:#e2d6b5;transform-origin:0 0;transform:scaleX(1.0)">https://signalmash.gventure.info/deepak/#</div>
<!-- ======== TASKBAR ======== -->
<div class="a" style="left:0;top:1008px;width:1920px;height:72px;background:#172e29;border-top:2px solid #3b4a46"></div>
<!-- weather -->
<div class="a" style="left:32px;top:1028px;width:30px;height:30px;border-radius:15px;background:linear-gradient(160deg,#f7c22c,#f08a12 60%,#e8590c)"></div>
<div class="a" style="left:46px;top:1017px;width:24px;height:24px;border-radius:12px;background:#c42b1c;color:#fff;font-size:15px;line-height:24px;text-align:center">4</div>
<div class="a nw" style="left:76px;top:1021px;font-size:18px;line-height:22px;color:#fff">25°C</div>
<div class="a nw" style="left:76px;top:1045px;font-size:18px;line-height:22px;color:#e6e6e6">Sunny</div>
<!-- start -->
<svg class="a" style="left:543px;top:1027px" width="35" height="35" viewBox="0 0 35 35"><defs><linearGradient id="wg" x1="0" y1="0" x2="1" y2="1"><stop offset="0" stop-color="#7fd6fb"/><stop offset="1" stop-color="#1a9df0"/></linearGradient></defs><rect x="0" y="0" width="16.6" height="16.6" rx="1.5" fill="url(#wg)"/><rect x="18.4" y="0" width="16.6" height="16.6" rx="1.5" fill="url(#wg)"/><rect x="0" y="18.4" width="16.6" height="16.6" rx="1.5" fill="url(#wg)"/><rect x="18.4" y="18.4" width="16.6" height="16.6" rx="1.5" fill="url(#wg)"/></svg>
<!-- search -->
<div class="a" style="left:600px;top:1022px;width:326px;height:44px;border-radius:22px;background:#eef0ef"></div>
<svg class="a" style="left:615px;top:1032px" width="26" height="26" viewBox="0 0 26 26"><circle cx="10.5" cy="10.5" r="8" fill="none" stroke="#222" stroke-width="2.4"/><path d="M16.5 16.5L23 23" stroke="#222" stroke-width="2.6" stroke-linecap="round"/></svg>
<div class="a nw" style="left:655px;top:1033.5px;font-size:19.8px;line-height:24px;color:#5a5a5a">Search</div>
<svg class="a" style="left:852px;top:1027px" width="70" height="34" viewBox="0 0 70 34"><rect x="0" y="27" width="68" height="4" rx="2" fill="#e3b47a"/><path d="M5 19H15L14 27H6Z" fill="#e08a6a"/><path d="M10 19Q6 10 3 9Q8 8 10 14Q11 6 15 4Q13 10 11 19" fill="#6cb24c"/><rect x="19" y="4" width="17" height="22" fill="#b97a3a"/><rect x="22" y="7" width="11" height="16" fill="#7ab8d9"/><path d="M22 23L27 16L33 21V23Z" fill="#4a7fa0"/><rect x="40" y="18" width="6" height="9" fill="#f3e3c0"/><path d="M43 12Q45 15 43 17Q41 15 43 12" fill="#f39c12"/><rect x="49" y="10" width="4" height="17" fill="#6a9a3a"/><rect x="53" y="4" width="4" height="23" fill="#2e8b8b"/><rect x="57" y="8" width="4" height="19" fill="#b85a2a"/></svg>
<!-- task view -->
<svg class="a" style="left:945px;top:1027px" width="38" height="34" viewBox="0 0 38 34"><rect x="0" y="10" width="27" height="24" rx="2" fill="#6b6b6b"/><rect x="10" y="0" width="28" height="24" rx="2" fill="#f4f4f4"/><rect x="10" y="10" width="17" height="14" fill="#c9c9c9"/></svg>
<!-- copilot -->
<svg class="a" style="left:1012px;top:1028px" width="36" height="33" viewBox="0 0 36 33"><defs><linearGradient id="cg1" x1="0" y1="0" x2="0" y2="1"><stop offset="0" stop-color="#19a6f2"/><stop offset="0.5" stop-color="#45b07a"/><stop offset="1" stop-color="#f7d200"/></linearGradient><linearGradient id="cg2" x1="0" y1="0" x2="0" y2="1"><stop offset="0" stop-color="#b054ec"/><stop offset="0.5" stop-color="#f2508e"/><stop offset="1" stop-color="#ffa35a"/></linearGradient></defs>
<path d="M19 1Q23 1 25 5L27.5 9.5H21Q18.5 9.5 17.8 12L20.8 3.5Z" fill="#1f52d6"/>
<path d="M15.5 20L14.3 28Q13.5 31 16 31H13Q10 31 9 27L7.5 22.7H11.5Q14.7 22.7 15.5 20Z" fill="#f2603a"/>
<path d="M8 1H19Q21.5 1 20.8 3.5L15.5 20Q14.7 22.7 11.5 22.7H4Q0.8 22.7 1.5 19.5L5.5 4.5Q6.5 1 8 1Z" fill="url(#cg1)"/>
<path d="M21 9.5H31Q34.6 9.5 33.8 13L29.5 28Q28.5 31 25 31H16Q13.5 31 14.3 28L18.5 12.5Q19.3 9.5 21 9.5Z" fill="url(#cg2)"/>
</svg>
<!-- explorer -->
<svg class="a" style="left:1077px;top:1028px" width="37" height="33" viewBox="0 0 37 33"><path d="M0 2Q0 0 2 0H12L15 3H35Q37 3 37 5V31Q37 33 35 33H2Q0 33 0 31Z" fill="#e8a914"/><rect x="0" y="6" width="37" height="27" rx="1.5" fill="#fcd04d"/><path d="M6 33V25Q6 22 9 22H28Q31 22 31 25V33Z" fill="#1c7dd6"/><rect x="12" y="26" width="13" height="2" fill="#0b4e94"/></svg>
<!-- thunderbird -->
<svg class="a" style="left:1143px;top:1027px" width="38" height="36" viewBox="0 0 38 36"><path d="M19 36Q3 35 1 20Q0 10 6 4Q4 12 8 17Q12 5 26 2Q34 1 37 6Q30 4 27 8Q36 10 37 20Q36 34 19 36Z" fill="#1f6fd0"/><path d="M10 20Q13 12 21 11Q30 12 31 21Q28 30 20 30Q12 29 10 20Z" fill="#cfe3fb"/><path d="M11 17L21 24L31 17" fill="none" stroke="#6ba4ea" stroke-width="2"/></svg>
<!-- chrome active -->
<div class="a" style="left:1198px;top:1014px;width:60px;height:60px;border-radius:6px;background:#263a32;border:1px solid #32463d"></div>
<svg class="a" style="left:1210px;top:1026px" width="36" height="36" viewBox="0 0 36 36"><circle cx="18" cy="18" r="18" fill="#db4437"/><path d="M18 18L2.4 9A18 18 0 0 0 18 36Z" fill="#0f9d58"/><path d="M18 18L18 36A18 18 0 0 0 33.6 9Z" fill="#f4b400"/><path d="M18 0A18 18 0 0 1 33.6 9H18Z" fill="#db4437"/><circle cx="18" cy="18" r="8.6" fill="#fff"/><circle cx="18" cy="18" r="6.8" fill="#3b7be8"/></svg>
<div class="a" style="left:1216px;top:1068px;width:24px;height:5px;border-radius:3px;background:#4cc2ff"></div>
<!-- teams -->
<svg class="a" style="left:1275px;top:1026px" width="36" height="38" viewBox="0 0 36 38"><circle cx="14" cy="9" r="4.5" fill="#9a8ff0"/><path d="M8 16H28Q30 16 30 18V30Q30 37 22 37Q14 37 12 30Z" fill="#7b83eb"/><rect x="0" y="18" width="17" height="17" rx="2.5" fill="#4b53bc"/><path d="M4 22H13M8.5 22V31" stroke="#fff" stroke-width="2.2"/></svg>
<div class="a" style="left:1295px;top:1018px;width:26px;height:26px;border-radius:13px;background:#4cc2ff;color:#111;font-size:16px;line-height:26px;text-align:center">41</div>
<div class="a" style="left:1290px;top:1069px;width:9px;height:4px;border-radius:2px;background:#8a9390"></div>
<!-- notepad -->
<svg class="a" style="left:1346px;top:1027px" width="29" height="36" viewBox="0 0 29 36"><rect x="0" y="3" width="28" height="31" rx="2" fill="#5fc0e8"/><rect x="0" y="27.5" width="28" height="3" fill="#e6e6e6"/><rect x="0" y="30.5" width="28" height="3.5" rx="1" fill="#c4621c"/><path d="M5 11H23M5 16H23M5 21H23" stroke="#1a6a96" stroke-width="1.8"/><path d="M5 1V5M11 1V5M17 1V5M23 1V5" stroke="#1a5a86" stroke-width="1.6"/></svg>
<div class="a" style="left:1356px;top:1069px;width:9px;height:4px;border-radius:2px;background:#8a9390"></div>
<!-- tray -->
<svg class="a" style="left:1584px;top:1037px" width="18" height="12" viewBox="0 0 18 12"><path d="M1.5 10L9 2.5L16.5 10" fill="none" stroke="#fff" stroke-width="1.8"/></svg>
<svg class="a" style="left:1628px;top:1031px" width="28" height="27" viewBox="0 0 28 27"><path d="M3 11A10 10 0 0 1 21 5.5" fill="none" stroke="#fff" stroke-width="1.3"/><path d="M23 1V7H17" fill="none" stroke="#fff" stroke-width="1.3"/><path d="M22 15A10 10 0 0 1 5 20.5" fill="none" stroke="#fff" stroke-width="1.3"/><path d="M2 25V19H8" fill="none" stroke="#fff" stroke-width="1.3"/><circle cx="19" cy="19" r="6" fill="#f7a20b"/></svg>
<svg class="a" style="left:1676px;top:1034px" width="26" height="19" viewBox="0 0 26 19"><path d="M1.5 7Q13 -3 24.5 7M5 10.5Q13 3.5 21 10.5M8.5 14Q13 10.5 17.5 14" fill="none" stroke="#fff" stroke-width="1.6" stroke-linecap="round"/><circle cx="13" cy="17" r="1.8" fill="#fff"/></svg>
<svg class="a" style="left:1712px;top:1034px" width="26" height="21" viewBox="0 0 26 21"><path d="M1.5 7H6L11 2.5V18.5L6 14H1.5Z" fill="none" stroke="#fff" stroke-width="1.4" stroke-linejoin="round"/><path d="M15 7.5Q17 10.5 15 13.5M18 5Q21.5 10.5 18 16M21 2.5Q26 10.5 21 18.5" fill="none" stroke="#fff" stroke-width="1.4" stroke-linecap="round"/></svg>
<svg class="a" style="left:1749px;top:1036px" width="25" height="16" viewBox="0 0 25 16"><rect x="1" y="1" width="20" height="14" rx="3" fill="none" stroke="#fff" stroke-width="1.5"/><rect x="4" y="4" width="8" height="8" fill="#fff"/><rect x="22" y="5.5" width="2.5" height="5" rx="1" fill="#fff"/></svg>
<div class="a nw" style="left:1770px;top:1021px;width:121px;text-align:right;font-size:18.5px;line-height:22px;color:#fff">11:48 AM</div>
<div class="a nw" style="left:1770px;top:1045px;width:121px;text-align:right;font-size:18.5px;line-height:22px;color:#fff">11/19/2025</div>
</body></html>
